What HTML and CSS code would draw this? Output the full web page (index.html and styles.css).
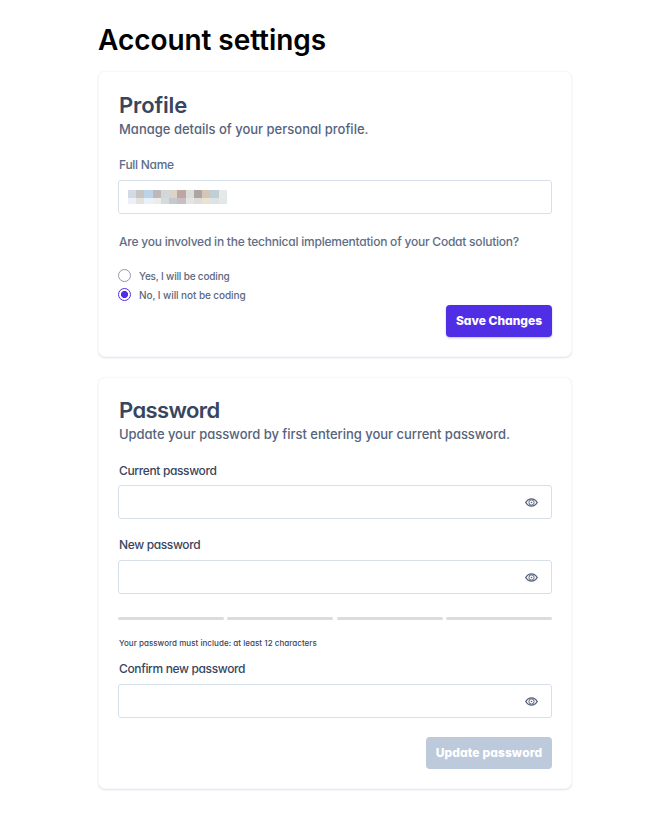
FILE: index.html
```html
<!DOCTYPE html>
<html lang="en">
<head>
<meta charset="utf-8">
<title>Account settings</title>
<link rel="stylesheet" href="styles.css">
</head>
<body>
<svg class="sprite" aria-hidden="true">
  <symbol id="eye" viewBox="0 0 13 9">
    <path d="M.8 4.5C2.3 2 4.2.9 6.5.9S10.700 2 12.200 4.500C10.700 7 8.800 8.100 6.500 8.100S2.300 7 .8 4.500Z" fill="none" stroke="currentColor" stroke-width="1.400"/>
    <circle cx="6.500" cy="4.500" r="2.600" fill="none" stroke="currentColor" stroke-width="1"/>
    <circle cx="6.500" cy="4.500" r=".8" fill="currentColor"/>
  </symbol>
</svg>
<main class="page">
  <h1 class="page-title">Account settings</h1>

  <section class="card profile">
    <h2 class="card-title t-profile">Profile</h2>
    <p class="card-sub">Manage details of your personal profile.</p>
    <div class="label muted l-name">Full Name</div>
    <div class="field">
      <svg class="redacted" viewBox="0 0 99 14" shape-rendering="crispEdges">
        <path fill="#d3dae5" d="M0 0h8v8H0z"/><path fill="#c7c5c2" d="M8 0h8v8H8z"/><path fill="#bdd4e8" d="M16 0h9v8h-9z"/><path fill="#bfb8b9" d="M25 0h8v8h-8z"/><path fill="#d2d7da" d="M33 0h8v8h-8z"/><path fill="#dcd3cb" d="M41 0h8v8h-8z"/><path fill="#bea7a3" d="M49 0h9v8h-9z"/><path fill="#dcdddb" d="M58 0h8v8h-8z"/><path fill="#aaa7a3" d="M66 0h8v8h-8z"/><path fill="#d4c6b2" d="M74 0h8v8h-8z"/><path fill="#c0ced6" d="M82 0h9v8h-9z"/><path fill="#e5e9e9" d="M91 0h8v8h-8z"/>
        <path fill="#edf0f9" d="M0 8h8v6H0z"/><path fill="#e5e2dd" d="M8 8h8v6H8z"/><path fill="#e9f1f9" d="M16 8h9v6h-9z"/><path fill="#ececea" d="M25 8h8v6h-8z"/><path fill="#d5dadb" d="M33 8h8v6h-8z"/><path fill="#c4cacc" d="M41 8h8v6h-8z"/><path fill="#c9bfc2" d="M49 8h9v6h-9z"/><path fill="#e4e4e3" d="M58 8h8v6h-8z"/><path fill="#dedddc" d="M66 8h8v6h-8z"/><path fill="#ebe2d3" d="M74 8h8v6h-8z"/><path fill="#dde2e5" d="M82 8h9v6h-9z"/><path fill="#e3e7e8" d="M91 8h8v6h-8z"/>
      </svg>
    </div>
    <div class="label muted question">Are you involved in the technical implementation of your Codat solution?</div>
    <div class="options">
      <div class="option"><span class="radio"></span><span class="o-yes">Yes, I will be coding</span></div>
      <div class="option"><span class="radio checked"></span><span class="o-no">No, I will not be coding</span></div>
    </div>
    <div class="actions"><button class="btn primary">Save Changes</button></div>
  </section>

  <section class="card password">
    <h2 class="card-title t-password">Password</h2>
    <p class="card-sub s-password">Update your password by first entering your current password.</p>
    <div class="label l-current">Current password</div>
    <div class="field secret"><svg class="eye"><use href="#eye"/></svg></div>
    <div class="label l-new">New password</div>
    <div class="field secret"><svg class="eye"><use href="#eye"/></svg></div>
    <div class="strength"><i></i><i></i><i></i><i></i></div>
    <p class="hint">Your password must include: at least 12 characters</p>
    <div class="label l-confirm">Confirm new password</div>
    <div class="field secret"><svg class="eye"><use href="#eye"/></svg></div>
    <div class="actions"><button class="btn disabled" disabled>Update password</button></div>
  </section>
</main>
</body>
</html>
```
FILE: styles.css
```css
* { box-sizing: border-box; }
body {
  margin: 0;
  background: #fff;
  color: #384560;
  font-family: Inter, "Open Sans", sans-serif;
  font-feature-settings: "cv11" 1;
  white-space: nowrap;
}
h1, h2, p { margin: 0; }
.sprite { display: none; }
.page { width: 474px; margin-left: 98px; padding-top: 23px; }
.page-title {
  height: 48px;
  color: #000;
  font-size: 28px;
  line-height: 34px;
  font-weight: 600;
  letter-spacing: -.06px;
}
.card {
  display: flex;
  flex-direction: column;
  padding: 19px;
  margin-bottom: 20px;
  border: 1px solid #f7f7fc;
  border-radius: 7px;
  background: #fff;
  box-shadow: 0 1px 2px rgba(50, 50, 93, .14);
}
.profile { height: 286px; }
.password { height: 412px; padding-top: 18px; }
.card-title { padding-left: 1px; font-size: 22px; line-height: 28px; font-weight: 600; }
.t-profile { letter-spacing: -.15px; }
.t-password { letter-spacing: -.6px; }
.card-sub { padding-left: 1px; color: #56637c; font-size: 13px; line-height: 20px; font-weight: 500; }
.s-password { letter-spacing: -.03px; }
.label { padding-left: 1px; font-size: 12px; line-height: 16px; font-weight: 500; letter-spacing: -.36px; }
.muted { color: #5e6d86; }
.l-name, .l-current { margin-top: 18px; }
.l-name { letter-spacing: -.28px; }
.l-current { padding-top: 1px; height: 16px; }
.l-new { margin-top: 18px; }
.question { margin-top: 20px; letter-spacing: -.225px; }
.field {
  display: flex;
  align-items: center;
  flex: none;
  height: 34px;
  margin-top: 7px;
  padding: 0 9px;
  border: 1px solid #d6e0eb;
  border-radius: 3px;
}
.secret { justify-content: flex-end; padding-right: 13px; }
.redacted { width: 99px; height: 14px; }
.eye { width: 13px; height: 9px; color: #56637c; }
.options { margin-top: 16px; }
.option { display: flex; align-items: center; gap: 8px; height: 19px; color: #5c687e; font-size: 10px; font-weight: 500; }
.o-yes { letter-spacing: -.18px; }
.o-no { letter-spacing: -.09px; }
.radio { width: 13px; height: 13px; border: 1px solid #8d99af; border-radius: 50%; }
.checked { border-color: #502ee6; background: radial-gradient(circle, #502ee6 3.2px, #fff 3.9px); }
.actions { display: flex; justify-content: flex-end; margin-top: auto; }
.btn {
  height: 32px;
  padding: 0 0 1px;
  border: 0;
  border-radius: 4px;
  color: #fff;
  font: 800 12px Inter, sans-serif;
  font-feature-settings: "cv11" 1;
}
.primary { width: 106px; background: #502ee6; box-shadow: 0 1px 2px rgba(50, 50, 93, .3); }
.disabled { width: 126px; background: #bdcadb; letter-spacing: .1px; }
.strength { display: grid; grid-template-columns: repeat(4, 1fr); gap: 3.5px; margin-top: 23px; }
.strength i { height: 3px; border-radius: 2px; background: #dcdcdc; }
.hint { margin-top: 17px; padding-left: 1px; font-size: 8px; line-height: 12px; font-weight: 500; letter-spacing: .04px; }
.l-confirm { margin-top: 12px; }
```
